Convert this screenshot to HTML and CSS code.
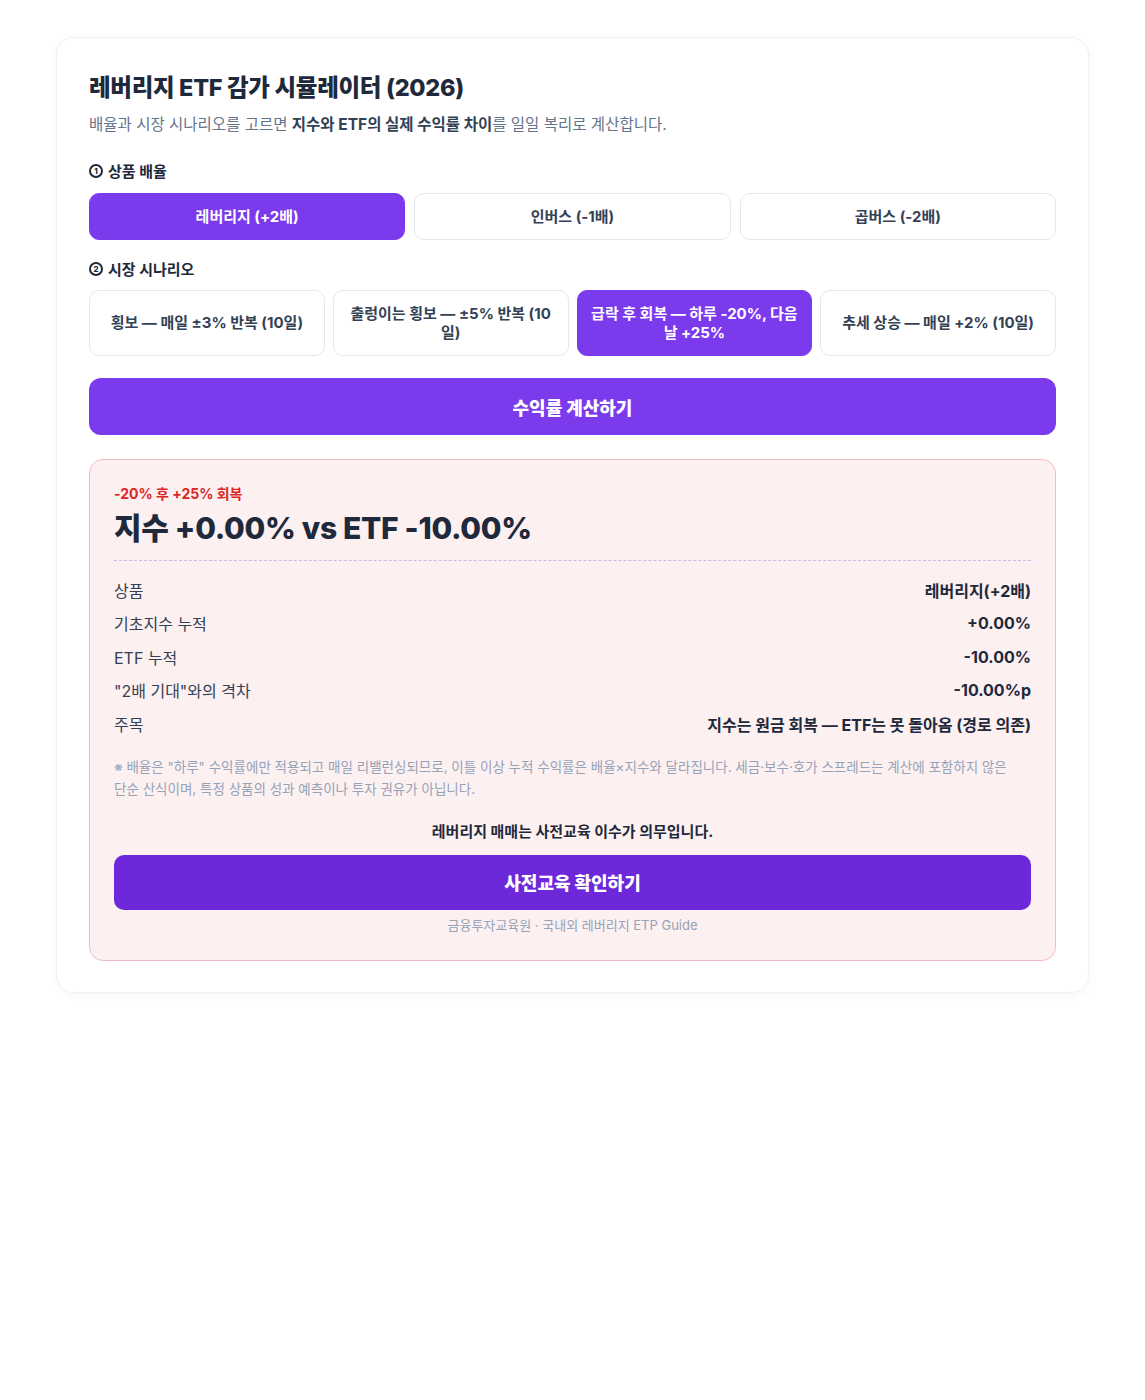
FILE: index.html
```html
<!DOCTYPE html>
<html lang="ko">
<head>
    <meta charset="UTF-8">
    <meta name="viewport" content="width=device-width, initial-scale=1.0">
    <title>레버리지 ETF 감가 시뮬레이터 (2026)</title>
    <link rel="stylesheet" href="styles.css">
</head>
<body>
    <div class="card">
        <h1>레버리지 ETF 감가 시뮬레이터 (2026)</h1>
        <p class="lead">배율과 시장 시나리오를 고르면 <b>지수와 ETF의 실제 수익률 차이</b>를 일일 복리로 계산합니다.</p>

        <div class="step"><span class="num">1</span>상품 배율</div>
        <div class="choices three">
            <button class="choice active">레버리지 (+2배)</button>
            <button class="choice">인버스 (-1배)</button>
            <button class="choice">곱버스 (-2배)</button>
        </div>

        <div class="step second"><span class="num">2</span>시장 시나리오</div>
        <div class="choices four">
            <button class="choice tall">횡보 — 매일 ±3% 반복 (10일)</button>
            <button class="choice tall">출렁이는 횡보 — ±5% 반복 (10일)</button>
            <button class="choice tall active">급락 후 회복 — 하루 -20%, 다음날 +25%</button>
            <button class="choice tall">추세 상승 — 매일 +2% (10일)</button>
        </div>

        <button class="calc">수익률 계산하기</button>

        <div class="result">
            <div class="tag">-20% 후 +25% 회복</div>
            <div class="headline">지수 +0.00% vs ETF -10.00%</div>

            <div class="rows">
                <div class="row"><span>상품</span><strong>레버리지(+2배)</strong></div>
                <div class="row"><span>기초지수 누적</span><strong>+0.00%</strong></div>
                <div class="row"><span>ETF 누적</span><strong>-10.00%</strong></div>
                <div class="row"><span>"2배 기대"와의 격차</span><strong>-10.00%p</strong></div>
                <div class="row"><span>주목</span><strong>지수는 원금 회복 — ETF는 못 돌아옴 (경로 의존)</strong></div>
            </div>

            <p class="note">※ 배율은 "하루" 수익률에만 적용되고 매일 리밸런싱되므로, 이틀 이상 누적 수익률은 배율×지수와 달라집니다. 세금·보수·호가 스프레드는 계산에 포함하지 않은 단순 산식이며, 특정 상품의 성과 예측이나 투자 권유가 아닙니다.</p>

            <p class="notice">레버리지 매매는 사전교육 이수가 의무입니다.</p>
            <button class="edu">사전교육 확인하기</button>
            <p class="source">금융투자교육원 · 국내외 레버리지 ETP Guide</p>
        </div>
    </div>
</body>
</html>
```

FILE: styles.css
```css
body {
    margin: 0;
    padding: 37px 56px 40px;
    background: #fff;
    font-family: Inter, "Noto Sans CJK KR", sans-serif;
    color: #1e293b;
}

.card {
    border: 1px solid #eef0f4;
    border-radius: 18px;
    box-shadow: 0 2px 10px rgba(15, 23, 42, 0.04);
    padding: 31px 32px 31px;
}

h1 {
    margin: 0;
    font-size: 23.5px;
    font-weight: 800;
    color: #1e293b;
    letter-spacing: -0.3px;
}

.lead {
    margin: 9px 0 0;
    font-size: 15.5px;
    color: #64748b;
}

.lead b {
    color: #334155;
    font-weight: 700;
}

.step {
    display: flex;
    align-items: center;
    gap: 5px;
    margin: 26px 0 12px;
    font-size: 15px;
    font-weight: 700;
    color: #1e293b;
}

.step.second {
    margin: 18px 0 11px;
}

/* circled step number */
.num {
    display: inline-flex;
    align-items: center;
    justify-content: center;
    width: 10px;
    height: 10px;
    border: 2px solid #1e293b;
    border-radius: 50%;
    font-size: 8px;
    font-weight: 800;
    line-height: 1;
}

.choices {
    display: grid;
    gap: 9px;
}

.choices.three {
    grid-template-columns: repeat(3, 1fr);
}

.choices.four {
    grid-template-columns: repeat(4, 1fr);
    gap: 8px;
}

.choice {
    height: 47px;
    border: 1px solid #e2e8f0;
    border-radius: 10px;
    background: #fff;
    font-family: inherit;
    font-size: 15px;
    font-weight: 700;
    color: #334155;
    cursor: pointer;
    line-height: 1.3;
    padding: 0 12px;
}

.choice.tall {
    height: 66px;
}

.choice.active {
    background: #7c3aed;
    border-color: #7c3aed;
    color: #fff;
}

.calc {
    display: block;
    width: 100%;
    height: 57px;
    margin-top: 22px;
    border: none;
    border-radius: 12px;
    background: #7c3aed;
    color: #fff;
    font-family: inherit;
    font-size: 18px;
    font-weight: 800;
    cursor: pointer;
}

.result {
    margin-top: 24px;
    background: #fdf0f1;
    border: 1px solid #f4bcc3;
    border-radius: 14px;
    padding: 23px 24px 26px;
}

.tag {
    font-size: 14px;
    font-weight: 700;
    color: #dc2626;
}

.headline {
    margin-top: 1px;
    font-size: 30px;
    font-weight: 800;
    color: #1e293b;
    letter-spacing: -0.3px;
    padding-bottom: 12px;
    border-bottom: 1px dashed #d8b4e6;
}

.rows {
    margin-top: 12px;
}

.row {
    display: flex;
    justify-content: space-between;
    align-items: center;
    height: 33.5px;
    font-size: 16px;
}

.row span {
    color: #334155;
}

.row strong {
    font-weight: 700;
    color: #1e293b;
}

.note {
    margin: 15px 0 0;
    font-size: 13.5px;
    line-height: 22px;
    color: #94a3b8;
    word-break: keep-all;
}

.notice {
    margin: 20px 0 0;
    text-align: center;
    font-size: 15px;
    font-weight: 700;
    color: #1e293b;
}

.edu {
    display: block;
    width: 100%;
    height: 55px;
    margin-top: 14px;
    border: none;
    border-radius: 10px;
    background: #6d28d9;
    color: #fff;
    font-family: inherit;
    font-size: 18px;
    font-weight: 800;
    cursor: pointer;
}

.source {
    margin: 5px 0 0;
    text-align: center;
    font-size: 13px;
    color: #94a3b8;
}
```
